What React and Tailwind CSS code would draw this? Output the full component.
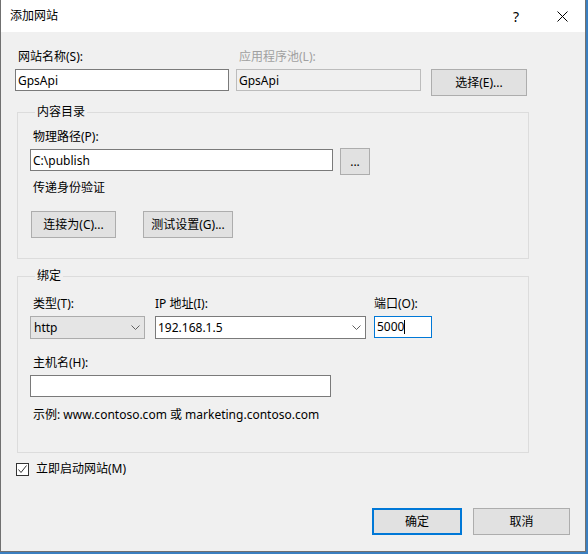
import { useState } from 'react';

const FONT = "font-['Noto_Sans','Noto_Sans_CJK_SC',sans-serif]";

const Label = ({ children, disabled, flush }) => (
  <div
    className={`h-[16px] text-[12px] leading-[16px] ${flush ? '' : 'pl-[3px]'} ${
      disabled ? 'text-[#a0a0a0]' : 'text-black'
    }`}
  >
    {children}
  </div>
);

const TextBox = ({ value, onChange, className = '', disabled }) => (
  <input
    type="text"
    value={value}
    disabled={disabled}
    onChange={(e) => onChange && onChange(e.target.value)}
    className={`h-[22px] px-[2px] text-[12px] text-black outline-none border ${
      disabled ? 'bg-[#f0f0f0] border-[#bcbcbc]' : 'bg-white border-[#7a7a7a]'
    } ${className}`}
  />
);

const Button = ({ children, className = '', primary }) => (
  <button
    className={`h-[27px] text-[12px] text-black flex items-center justify-center ${
      primary ? 'border-2 border-[#0078d7] bg-[#e1e1e1]' : 'border border-[#adadad] bg-[#e1e1e1]'
    } ${className}`}
  >
    {children}
  </button>
);

const Chevron = () => (
  <svg width="9" height="5" viewBox="0 0 9 5" className="shrink-0">
    <path d="M0.5 0.5 L4.5 4.5 L8.5 0.5" fill="none" stroke="#606060" strokeWidth="1" />
  </svg>
);

const GroupBox = ({ title, children, className = '' }) => (
  <fieldset className={`ml-[16px] w-[512px] border border-[#dcdcdc] ${className}`}>
    <legend className="ml-[5px] px-[2px] text-[12px] leading-[16px] text-black">{title}</legend>
    {children}
  </fieldset>
);

export default function App() {
  const [form, setForm] = useState({
    name: 'GpsApi',
    path: 'C:\\publish',
    host: '',
    port: '5000',
    start: true,
  });

  const handleChange = (field, value) => {
    setForm((prev) => ({ ...prev, [field]: value }));
  };

  return (
    <div className={`w-[588px] h-[554px] bg-[#3b7fc0] ${FONT}`}>
      <div className="w-[586px] h-[552px] flex flex-col bg-[#f0f0f0] border-x border-b border-[#707070]">
        {/* title bar */}
        <div className="h-[32px] shrink-0 bg-white flex items-center">
          <div className="pl-[9px] text-[12px] text-black flex-1">添加网站</div>
          <div className="w-[46px] h-full flex items-center justify-center text-[14px] text-black">?</div>
          <div className="w-[46px] h-full flex items-center justify-center">
            <svg width="11" height="11" viewBox="0 0 11 11">
              <path d="M0.5 0.5 L10.5 10.5 M10.5 0.5 L0.5 10.5" stroke="#000" strokeWidth="1" />
            </svg>
          </div>
        </div>

        <div className="flex-1 pt-[17px]">
          {/* site name / app pool */}
          <div className="flex items-start ml-[14px]">
            <div className="w-[214px] flex flex-col gap-[4px]">
              <Label>网站名称(S):</Label>
              <TextBox value={form.name} onChange={(v) => handleChange('name', v)} className="w-full" />
            </div>
            <div className="ml-[7px] w-[185px] flex flex-col gap-[4px]">
              <Label disabled>应用程序池(L):</Label>
              <TextBox value={form.name} disabled className="w-full" />
            </div>
            <Button className="ml-[10px] mt-[20px] w-[96px]">选择(E)...</Button>
          </div>

          {/* content directory */}
          <GroupBox title="内容目录" className="mt-[8px] pl-[12px] pt-[9px] pb-[20px]">
            <Label>物理路径(P):</Label>
            <div className="mt-[3px] flex items-start">
              <TextBox value={form.path} onChange={(v) => handleChange('path', v)} className="mt-[1px] w-[303px]" />
              <Button className="ml-[7px] w-[30px]">...</Button>
            </div>
            <div className="mt-[5px]">
              <Label>传递身份验证</Label>
            </div>
            <div className="mt-[15px] flex">
              <Button className="ml-[1px] w-[85px]">连接为(C)...</Button>
              <Button className="ml-[27px] w-[90px]">测试设置(G)...</Button>
            </div>
          </GroupBox>

          {/* binding */}
          <GroupBox title="绑定" className="mt-[9px] pl-[12px] pt-[12px] pb-[29px]">
            <div className="flex items-start">
              <div className="w-[115px] flex flex-col gap-[4px]">
                <Label>类型(T):</Label>
                <div className="h-[23px] flex items-center justify-between pl-[3px] pr-[4px] bg-[#e5e5e5] border border-[#acacac] text-[12px]">
                  <span>http</span>
                  <Chevron />
                </div>
              </div>
              <div className="ml-[10px] w-[211px] flex flex-col gap-[4px]">
                <Label flush>IP 地址(I):</Label>
                <div className="h-[23px] flex items-center justify-between pl-[2px] pr-[4px] bg-white border border-[#7a7a7a] text-[12px]">
                  <span>192.168.1.5</span>
                  <Chevron />
                </div>
              </div>
              <div className="ml-[8px] w-[58px] flex flex-col gap-[4px]">
                <Label flush>端口(O):</Label>
                <div className="h-[22px] flex items-center pl-[2px] bg-white border border-[#0078d7] text-[12px]">
                  <span>{form.port}</span>
                  <span className="w-px h-[14px] bg-black" />
                </div>
              </div>
            </div>
            <div className="mt-[16px]">
              <Label>主机名(H):</Label>
            </div>
            <TextBox value={form.host} onChange={(v) => handleChange('host', v)} className="mt-[4px] w-[301px]" />
            <div className="mt-[10px]">
              <Label>示例: www.contoso.com 或 marketing.contoso.com</Label>
            </div>
          </GroupBox>

          {/* start now */}
          <div className="mt-[8px] ml-[15px] h-[16px] flex items-center">
            <button
              onClick={() => handleChange('start', !form.start)}
              className="w-[13px] h-[13px] bg-white border border-[#333] flex items-center justify-center"
            >
              {form.start && (
                <svg width="11" height="11" viewBox="0 0 11 11">
                  <path d="M1.5 5.5 L4 8.5 L9.5 1.5" fill="none" stroke="#333" strokeWidth="1" />
                </svg>
              )}
            </button>
            <span className="ml-[7px] text-[12px] leading-[16px]">立即启动网站(M)</span>
          </div>

          {/* dialog buttons */}
          <div className="mt-[31px] flex justify-end pr-[15px] gap-[11px]">
            <Button primary className="w-[90px]">确定</Button>
            <Button className="w-[97px]">取消</Button>
          </div>
        </div>
      </div>
    </div>
  );
}
